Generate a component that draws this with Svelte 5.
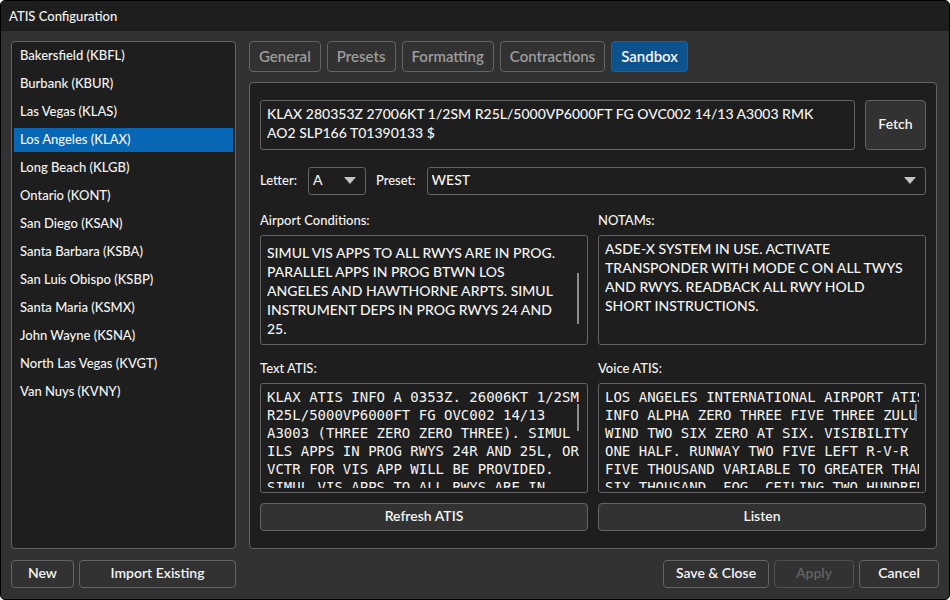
<script>
  const stations = [
    'Bakersfield (KBFL)',
    'Burbank (KBUR)',
    'Las Vegas (KLAS)',
    'Los Angeles (KLAX)',
    'Long Beach (KLGB)',
    'Ontario (KONT)',
    'San Diego (KSAN)',
    'Santa Barbara (KSBA)',
    'San Luis Obispo (KSBP)',
    'Santa Maria (KSMX)',
    'John Wayne (KSNA)',
    'North Las Vegas (KVGT)',
    'Van Nuys (KVNY)'
  ];
  const tabs = ['General', 'Presets', 'Formatting', 'Contractions', 'Sandbox'];

  let station = $state('Los Angeles (KLAX)');
  let tab = $state('Sandbox');
  let letter = $state('A');
  let preset = $state('WEST');

  let metar = $state(
    'KLAX 280353Z 27006KT 1/2SM R25L/5000VP6000FT FG OVC002 14/13 A3003 RMK\nAO2 SLP166 T01390133 $'
  );
  let conditions = $state(
    'SIMUL VIS APPS TO ALL RWYS ARE IN PROG.\nPARALLEL APPS IN PROG BTWN LOS\nANGELES AND HAWTHORNE ARPTS. SIMUL\nINSTRUMENT DEPS IN PROG RWYS 24 AND\n25.'
  );
  let notams = $state(
    'ASDE-X SYSTEM IN USE. ACTIVATE\nTRANSPONDER WITH MODE C ON ALL TWYS\nAND RWYS. READBACK ALL RWY HOLD\nSHORT INSTRUCTIONS.'
  );
  const textAtis =
    'KLAX ATIS INFO A 0353Z. 26006KT 1/2SM\nR25L/5000VP6000FT FG OVC002 14/13\nA3003 (THREE ZERO ZERO THREE). SIMUL\nILS APPS IN PROG RWYS 24R AND 25L, OR\nVCTR FOR VIS APP WILL BE PROVIDED.\nSIMUL VIS APPS TO ALL RWYS ARE IN';
  const voiceAtis =
    'LOS ANGELES INTERNATIONAL AIRPORT ATIS\nINFO ALPHA ZERO THREE FIVE THREE ZULU.\nWIND TWO SIX ZERO AT SIX. VISIBILITY\nONE HALF. RUNWAY TWO FIVE LEFT R-V-R\nFIVE THOUSAND VARIABLE TO GREATER THAN\nSIX THOUSAND. FOG. CEILING TWO HUNDRED';
</script>

{#snippet arrow()}
  <svg class="arrow" width="12" height="7" viewBox="0 0 12 7" aria-hidden="true">
    <path d="M0 0H12L6 7Z" fill="#c4c4c4" />
  </svg>
{/snippet}

<div class="window">
  <header><h1>ATIS Configuration</h1></header>

  <main>
    <ul class="stations">
      {#each stations as name}
        <li>
          <button class:selected={name === station} onclick={() => (station = name)}>{name}</button>
        </li>
      {/each}
    </ul>

    <div class="content">
      <nav>
        {#each tabs as name}
          <button class="tab" class:active={name === tab} onclick={() => (tab = name)}>{name}</button>
        {/each}
      </nav>

      <section class="panel">
        <div class="metar">
          <div class="box">
            <textarea aria-label="METAR" bind:value={metar} spellcheck="false"></textarea>
          </div>
          <button class="btn fetch">Fetch</button>
        </div>

        <div class="options">
          <label for="letter">Letter:</label>
          <div class="select letter">
            <select id="letter" bind:value={letter}>
              {#each ['A', 'B', 'C', 'D'] as l}<option>{l}</option>{/each}
            </select>
            {@render arrow()}
          </div>
          <label for="preset">Preset:</label>
          <div class="select preset">
            <select id="preset" bind:value={preset}>
              <option>WEST</option>
              <option>EAST</option>
            </select>
            {@render arrow()}
          </div>
        </div>

        <div class="pair first">
          <div class="field">
            <label for="conditions">Airport Conditions:</label>
            <div class="box scrolled">
              <textarea id="conditions" bind:value={conditions} spellcheck="false"></textarea>
              <span class="thumb long"></span>
            </div>
          </div>
          <div class="field">
            <label for="notams">NOTAMs:</label>
            <div class="box">
              <textarea id="notams" bind:value={notams} spellcheck="false"></textarea>
            </div>
          </div>
        </div>

        <div class="pair">
          <div class="field">
            <label for="text-atis">Text ATIS:</label>
            <div class="box mono">
              <textarea id="text-atis" readonly value={textAtis} spellcheck="false"></textarea>
              <span class="thumb"></span>
            </div>
          </div>
          <div class="field">
            <label for="voice-atis">Voice ATIS:</label>
            <div class="box mono">
              <textarea id="voice-atis" readonly value={voiceAtis} spellcheck="false"></textarea>
              <span class="thumb short"></span>
            </div>
          </div>
        </div>

        <div class="actions">
          <button class="btn">Refresh ATIS</button>
          <button class="btn">Listen</button>
        </div>
      </section>
    </div>
  </main>

  <footer>
    <div class="left">
      <button class="btn">New</button>
      <button class="btn grow">Import Existing</button>
    </div>
    <div class="right">
      <button class="btn save">Save &amp; Close</button>
      <button class="btn" disabled>Apply</button>
      <button class="btn">Cancel</button>
    </div>
  </footer>
</div>

<style>
  :global(body) {
    background: #fff;
  }

  .window,
  .window * {
    box-sizing: border-box;
  }

  .window {
    display: flex;
    flex-direction: column;
    min-height: 100vh;
    border: 1px solid #000;
    border-radius: 5px;
    background: #323232;
    color: #f4f4f4;
    font: 500 13px/18px Lato, 'Noto Sans', sans-serif;
    overflow: hidden;
  }

  button,
  select,
  textarea {
    margin: 0;
    font: inherit;
    color: inherit;
    outline: none;
  }

  header {
    padding: 6px 8px;
    background: #1e1e1e;
  }

  h1 {
    margin: 0;
    font-size: 13px;
    font-weight: 500;
    line-height: 18px;
  }

  main {
    display: flex;
    flex: 1;
    gap: 13px;
    padding: 10px 12px 11px 10px;
  }

  .stations {
    display: flex;
    flex-direction: column;
    flex: none;
    gap: 4px;
    width: 225px;
    margin: 0;
    padding: 2px;
    border: 1px solid #646464;
    border-radius: 4px;
    background: #1e1e1e;
    list-style: none;
  }

  .stations button {
    display: block;
    width: 100%;
    height: 24px;
    padding: 0 6px 2px;
    border: 0;
    background: none;
    text-align: left;
  }

  .stations .selected {
    background: #0867b5;
  }

  .content {
    display: flex;
    flex: 1;
    flex-direction: column;
    gap: 10px;
    min-width: 0;
  }

  nav {
    display: flex;
    gap: 6px;
  }

  .tab {
    height: 31px;
    padding: 0 9px 2px;
    border: 1px solid #646464;
    border-radius: 4px;
    background: #323232;
    color: #9c9c9c;
    font-size: 15px;
    font-weight: 600;
  }

  .tab.active {
    border-color: #0867b5;
    background: #0d528c;
    color: #f4f4f4;
  }

  .panel {
    display: flex;
    flex: 1;
    flex-direction: column;
    padding: 17px 10px;
    border: 1px solid #646464;
    border-radius: 4px;
    background: #1e1e1e;
  }

  .metar {
    display: flex;
    gap: 10px;
    height: 50px;
  }

  .box {
    position: relative;
    display: flex;
    flex: 1;
    padding: 3px 6px 4px;
    border: 1px solid #646464;
    border-radius: 3px;
  }

  .box.scrolled {
    padding-top: 7px;
  }

  .box.mono {
    padding-top: 4px;
  }

  textarea {
    display: block;
    width: 100%;
    min-height: 38px;
    padding: 0;
    border: 0;
    background: none;
    font-size: 14px;
    line-height: 19px;
    resize: none;
    white-space: pre;
    overflow: hidden;
  }

  .mono textarea {
    font-family: 'DejaVu Sans Mono', 'Liberation Mono', monospace;
    line-height: 18px;
  }

  .thumb {
    position: absolute;
    top: 20px;
    right: 8px;
    width: 2px;
    height: 27px;
    background: #8c8c8c;
  }

  .thumb.long {
    top: 37px;
    height: 51px;
  }

  .thumb.short {
    height: 17px;
  }

  .btn {
    height: 28px;
    min-width: 80px;
    padding: 0 10px 2px;
    border: 1px solid #646464;
    border-radius: 4px;
    background: #323232;
    font-size: 14px;
    font-weight: 600;
  }

  .btn:disabled {
    border-color: #505050;
    color: #646464;
  }

  .btn.fetch {
    height: auto;
    min-width: 61px;
  }

  .options {
    display: flex;
    align-items: center;
    gap: 10px;
    margin-top: 17px;
  }

  .options label {
    padding: 0 1px 2px 0;
  }

  .select {
    position: relative;
  }

  .select.letter {
    width: 58px;
  }

  .select.preset {
    flex: 1;
  }

  select {
    display: block;
    width: 100%;
    height: 28px;
    padding: 0 26px 2px 4px;
    border: 1px solid #646464;
    border-radius: 3px;
    background: #1e1e1e;
    font-size: 14px;
    appearance: none;
  }

  .arrow {
    position: absolute;
    top: 10px;
    right: 10px;
    pointer-events: none;
  }

  .pair {
    display: flex;
    flex: 1;
    gap: 10px;
    margin-top: 15px;
  }

  .pair.first {
    margin-top: 17px;
  }

  .field {
    display: flex;
    flex: 1;
    flex-direction: column;
    gap: 7px;
    min-width: 0;
  }

  .field label {
    line-height: 16px;
  }

  .actions {
    display: flex;
    gap: 10px;
    margin-top: 10px;
  }

  .actions .btn {
    flex: 1;
  }

  footer {
    display: flex;
    justify-content: space-between;
    padding: 0 10px 11px;
  }

  footer div {
    display: flex;
    gap: 5px;
  }

  .left {
    width: 225px;
  }

  .left .btn {
    min-width: 63px;
  }

  .left .grow {
    flex: 1;
  }

  .btn.save {
    min-width: 106px;
  }
</style>
